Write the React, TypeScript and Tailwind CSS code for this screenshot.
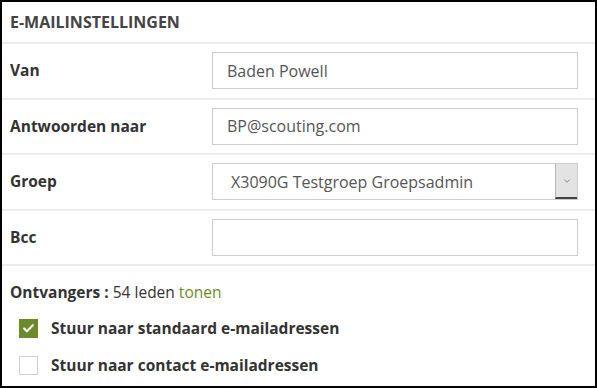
import { Check, ChevronDown } from 'lucide-react'

const font = { fontFamily: '"Open Sans", "Noto Sans", sans-serif' }

function Row({ label, children }: { label: string; children: React.ReactNode }) {
    return (
        <div className="flex items-center h-[55.5px] border-b-2 border-[#ececec] pl-[8px]">
            <div className="w-[202px] text-[15.5px] font-bold text-[#333]">{label}</div>
            <div className="w-[366px]">{children}</div>
        </div>
    )
}

function TextBox({ value }: { value?: string }) {
    return (
        <div className="h-[37px] border border-[#cccccc] bg-white flex items-center px-[14px] text-[16px] text-[#555]">
            {value}
        </div>
    )
}

export default function App() {
    return (
        <div style={font} className="w-[597px] h-[388px] border-2 border-black bg-white overflow-hidden">
            {/* Kop */}
            <div className="h-[42px] flex items-center px-[8px] border-b-2 border-[#ececec]">
                <h2 className="text-[16px] font-bold uppercase text-[#444]">E-mailinstellingen</h2>
            </div>

            <Row label="Van">
                <TextBox value="Baden Powell" />
            </Row>
            <Row label="Antwoorden naar">
                <TextBox value="BP@scouting.com" />
            </Row>
            <Row label="Groep">
                <div className="h-[37px] border border-[#cccccc] bg-white flex items-center text-[16px] text-[#555]">
                    <span className="flex-1 pl-[18px]">X3090G Testgroep Groepsadmin</span>
                    <span className="w-[22px] h-[35px] flex items-center justify-center bg-[#e3e3e3] border-l border-[#b5b5b5] border-b-2 border-b-[#444]">
                        <ChevronDown className="w-[10px] h-[10px] text-[#777]" strokeWidth={2} />
                    </span>
                </div>
            </Row>
            <Row label="Bcc">
                <TextBox />
            </Row>

            {/* Ontvangers */}
            <div className="px-[8px] pt-[15px]">
                <p className="text-[15.5px] text-[#333]">
                    <span className="font-bold">Ontvangers :</span> 54 leden{' '}
                    <span className="text-[#6b8e23]">tonen</span>
                </p>
                <div className="mt-[13px] flex flex-col gap-[13px] pl-[9px]">
                    <label className="flex items-center gap-[13px] text-[15.5px] font-bold text-[#333]">
                        <span className="w-[19px] h-[19px] bg-[#6b8a2c] flex items-center justify-center">
                            <Check className="w-[13px] h-[13px] text-white" strokeWidth={4} />
                        </span>
                        Stuur naar standaard e-mailadressen
                    </label>
                    <label className="flex items-center gap-[13px] text-[15.5px] font-bold text-[#333]">
                        <span className="w-[19px] h-[19px] border border-[#d0d0d0] bg-white" />
                        Stuur naar contact e-mailadressen
                    </label>
                </div>
            </div>
        </div>
    )
}
